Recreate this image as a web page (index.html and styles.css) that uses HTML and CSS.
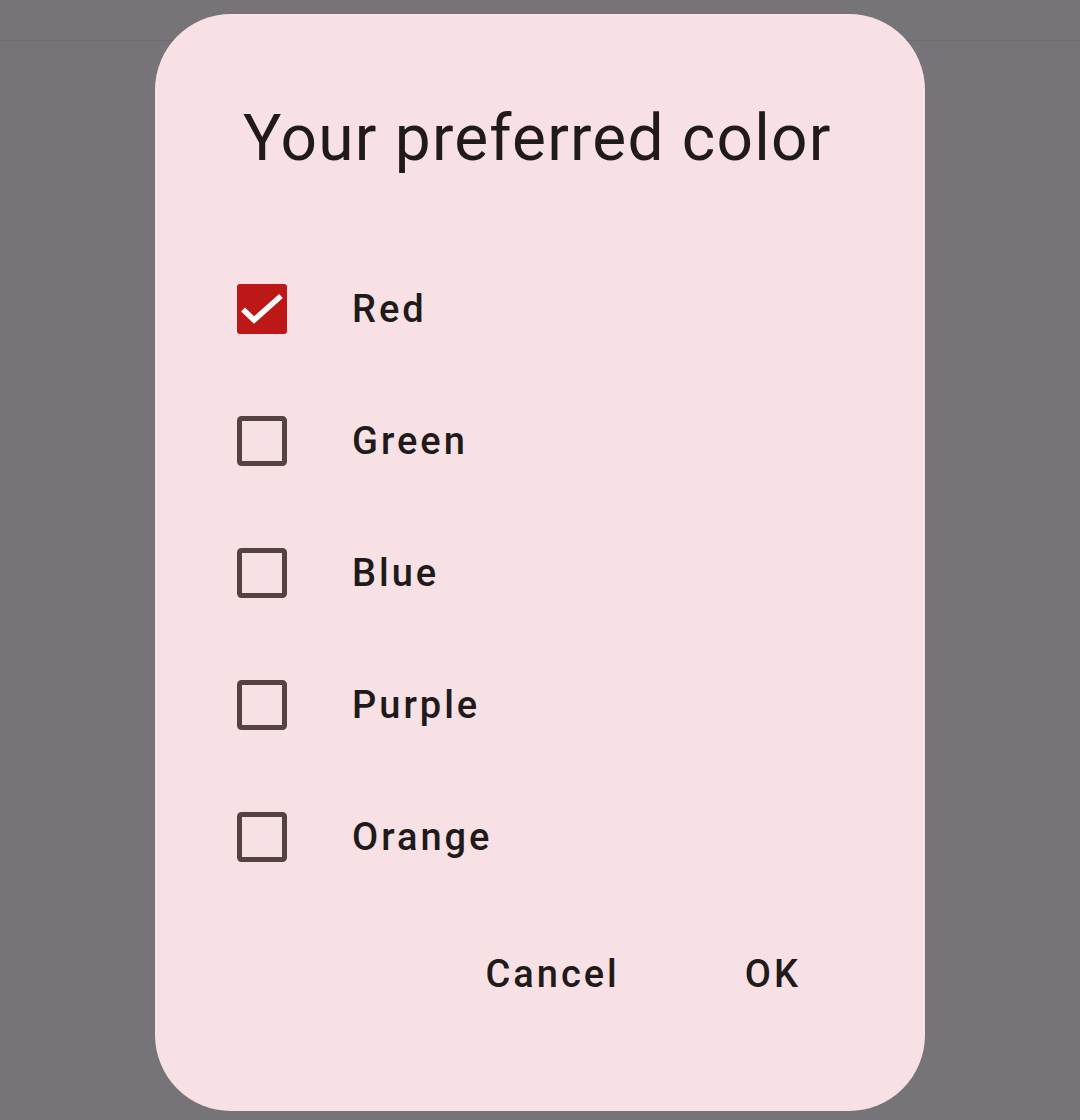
FILE: index.html
```html
<!DOCTYPE html>
<html lang="en">
<head>
<meta charset="utf-8">
<title>Your preferred color</title>
<link rel="stylesheet" href="styles.css">
</head>
<body>
<div class="appbar"></div>
<div class="dialog" role="dialog">
  <h1 class="title">Your preferred color</h1>
  <ul class="options">
    <li class="option">
      <svg class="box" viewBox="0 0 50 50"><rect class="fill" x="0" y="0" width="50" height="50" rx="3"/><polyline class="check" points="6,25.5 17,36 44,12"/></svg>
      <span class="label">Red</span>
    </li>
    <li class="option">
      <svg class="box" viewBox="0 0 50 50"><rect class="outline" x="2.5" y="2.5" width="45" height="45" rx="2"/></svg>
      <span class="label">Green</span>
    </li>
    <li class="option">
      <svg class="box" viewBox="0 0 50 50"><rect class="outline" x="2.5" y="2.5" width="45" height="45" rx="2"/></svg>
      <span class="label">Blue</span>
    </li>
    <li class="option">
      <svg class="box" viewBox="0 0 50 50"><rect class="outline" x="2.5" y="2.5" width="45" height="45" rx="2"/></svg>
      <span class="label">Purple</span>
    </li>
    <li class="option">
      <svg class="box" viewBox="0 0 50 50"><rect class="outline" x="2.5" y="2.5" width="45" height="45" rx="2"/></svg>
      <span class="label">Orange</span>
    </li>
  </ul>
  <div class="actions">
    <button class="btn">Cancel</button>
    <button class="btn">OK</button>
  </div>
</div>
</body>
</html>
```

FILE: styles.css
```css
html, body {
  margin: 0;
  padding: 0;
}
body {
  background: #767478;
  width: 1080px;
  height: 1120px;
  overflow: hidden;
  position: relative;
  font-family: Roboto, "Noto Sans", sans-serif;
  color: #201a1b;
}
.appbar {
  height: 40px;
  border-bottom: 1px solid #6e6c70;
}
.dialog {
  position: absolute;
  left: 155px;
  top: 14px;
  width: 770px;
  height: 1097px;
  box-sizing: border-box;
  border-radius: 76px;
  background: #f7e1e4;
  padding: 85px 124px 0 82px;
}
.title {
  margin: 0 0 0 6px;
  font-size: 64px;
  line-height: 80px;
  font-weight: 400;
  letter-spacing: 1.2px;
  white-space: nowrap;
}
.options {
  list-style: none;
  margin: 64px 0 0 0;
  padding: 0;
}
.option {
  height: 132px;
  display: flex;
  align-items: center;
  gap: 65px;
}
.box {
  width: 50px;
  height: 50px;
  flex: none;
  display: block;
}
.fill {
  fill: #bd1818;
}
.check {
  fill: none;
  stroke: #ffffff;
  stroke-width: 5.5;
}
.outline {
  fill: none;
  stroke: #554343;
  stroke-width: 5;
}
.label {
  font-size: 38px;
  font-weight: 500;
  letter-spacing: 3px;
  line-height: 48px;
}
.actions {
  margin-top: 31px;
  display: flex;
  justify-content: flex-end;
  gap: 125px;
}
.btn {
  border: 0;
  background: none;
  padding: 0;
  height: 80px;
  font-family: Roboto, "Noto Sans", sans-serif;
  font-size: 38px;
  font-weight: 500;
  letter-spacing: 3px;
  color: #201a1b;
}
```
